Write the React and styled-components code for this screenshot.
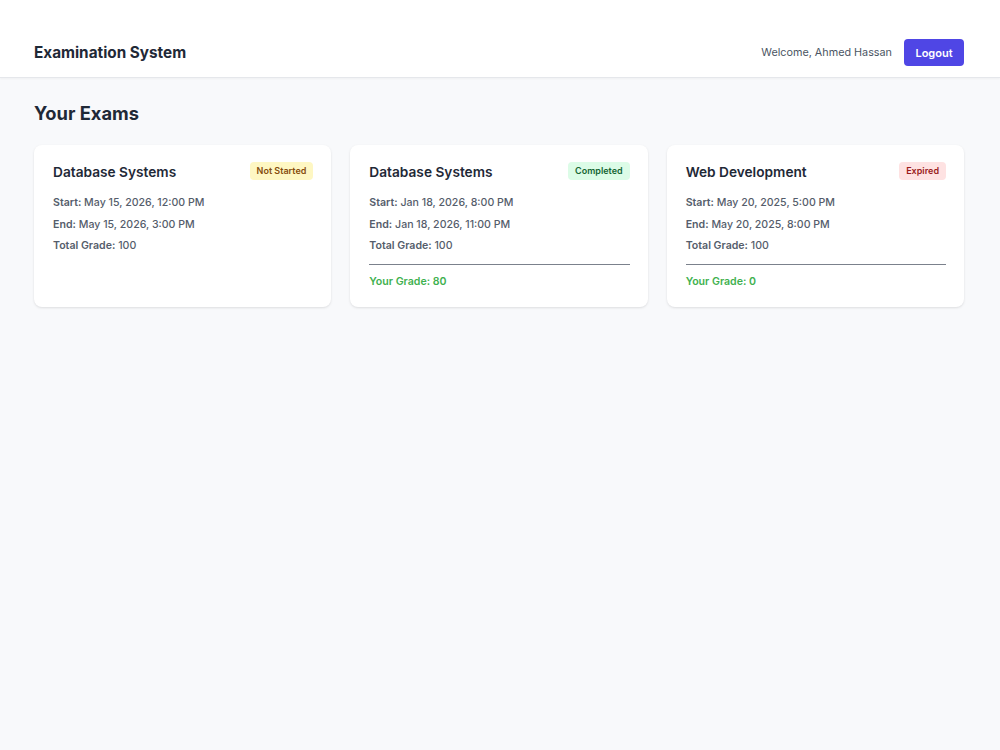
import React from "react";
import styled, { createGlobalStyle } from "styled-components";

const GlobalStyle = createGlobalStyle`
  html, body { margin: 0; padding: 0; }
  body {
    background: #f8f9fb;
    font-family: Inter, "Noto Sans", "Liberation Sans", sans-serif;
    color: #1f2937;
  }
  * { box-sizing: border-box; }
`;

const Page = styled.div`
  min-height: 750px;
  background: #f8f9fb;
`;

const Header = styled.header`
  display: flex;
  align-items: center;
  justify-content: space-between;
  background: #ffffff;
  padding: 39px 36px 11px 34px;
  border-bottom: 1px solid #e5e7eb;
  box-shadow: 0 1px 2px rgba(0, 0, 0, 0.04);
`;

const Brand = styled.h1`
  margin: 0;
  font-size: 15.3px;
  font-weight: 700;
  color: #1f2937;
  line-height: 26px;
`;

const UserArea = styled.div`
  display: flex;
  align-items: center;
  gap: 12px;
`;

const Welcome = styled.span`
  font-size: 10.8px;
  color: #4b5563;
`;

const LogoutButton = styled.button`
  font-family: inherit;
  background: #4f46e5;
  color: #ffffff;
  border: none;
  border-radius: 4px;
  height: 27px;
  width: 60px;
  padding: 0;
  font-size: 11px;
  font-weight: 600;
  cursor: pointer;
`;

const Main = styled.main`
  padding: 23px 36px 24px 34px;
`;

const Heading = styled.h2`
  margin: 0 0 20px;
  font-size: 18.3px;
  font-weight: 700;
  color: #1f2937;
  line-height: 24px;
`;

const Grid = styled.div`
  display: grid;
  grid-template-columns: repeat(3, 1fr);
  gap: 19px;
`;

const Card = styled.div`
  background: #ffffff;
  border-radius: 8px;
  box-shadow: 0 1px 3px rgba(0, 0, 0, 0.08), 0 1px 2px rgba(0, 0, 0, 0.04);
  padding: 16px 18px 16px 19px;
  min-height: 161px;
`;

const CardTop = styled.div`
  display: flex;
  justify-content: space-between;
  align-items: flex-start;
  margin-bottom: 9px;
`;

const CardTitle = styled.h3`
  margin: 0;
  font-size: 13.7px;
  font-weight: 600;
  color: #1f2937;
  line-height: 22px;
`;

const badgeColors = {
  notstarted: { bg: "#fef7c3", fg: "#854d0e" },
  completed: { bg: "#dcfce7", fg: "#166534" },
  expired: { bg: "#fee2e2", fg: "#991b1b" },
};

const Badge = styled.span`
  margin-top: 1px;
  font-size: 9px;
  font-weight: 600;
  line-height: 18px;
  padding: 0 7px;
  border-radius: 4px;
  background: ${(p) => badgeColors[p.$kind].bg};
  color: ${(p) => badgeColors[p.$kind].fg};
`;

const Detail = styled.p`
  margin: 0;
  font-size: 10.6px;
  font-weight: 500;
  line-height: 21.5px;
  color: #555d6b;
`;

const Label = styled.span`
  font-weight: 600;
`;

const Divider = styled.hr`
  border: none;
  border-top: 1px solid #7b818c;
  margin: 7px 0 8px;
`;

const Grade = styled.p`
  margin: 0;
  font-size: 10.6px;
  font-weight: 600;
  line-height: 18px;
  color: #3fb14f;
`;

const exams = [
  {
    title: "Database Systems",
    status: "notstarted",
    label: "Not Started",
    start: "May 15, 2026, 12:00 PM",
    end: "May 15, 2026, 3:00 PM",
    total: 100,
  },
  {
    title: "Database Systems",
    status: "completed",
    label: "Completed",
    start: "Jan 18, 2026, 8:00 PM",
    end: "Jan 18, 2026, 11:00 PM",
    total: 100,
    grade: 80,
  },
  {
    title: "Web Development",
    status: "expired",
    label: "Expired",
    start: "May 20, 2025, 5:00 PM",
    end: "May 20, 2025, 8:00 PM",
    total: 100,
    grade: 0,
  },
];

export default function App() {
  return (
    <Page>
      <GlobalStyle />
      <Header>
        <Brand>Examination System</Brand>
        <UserArea>
          <Welcome>Welcome, Ahmed Hassan</Welcome>
          <LogoutButton>Logout</LogoutButton>
        </UserArea>
      </Header>
      <Main>
        <Heading>Your Exams</Heading>
        <Grid>
          {exams.map((e, i) => (
            <Card key={i}>
              <CardTop>
                <CardTitle>{e.title}</CardTitle>
                <Badge $kind={e.status}>{e.label}</Badge>
              </CardTop>
              <Detail>
                <Label>Start:</Label> {e.start}
              </Detail>
              <Detail>
                <Label>End:</Label> {e.end}
              </Detail>
              <Detail>
                <Label>Total Grade:</Label> {e.total}
              </Detail>
              {e.grade !== undefined && (
                <>
                  <Divider />
                  <Grade>Your Grade: {e.grade}</Grade>
                </>
              )}
            </Card>
          ))}
        </Grid>
      </Main>
    </Page>
  );
}
